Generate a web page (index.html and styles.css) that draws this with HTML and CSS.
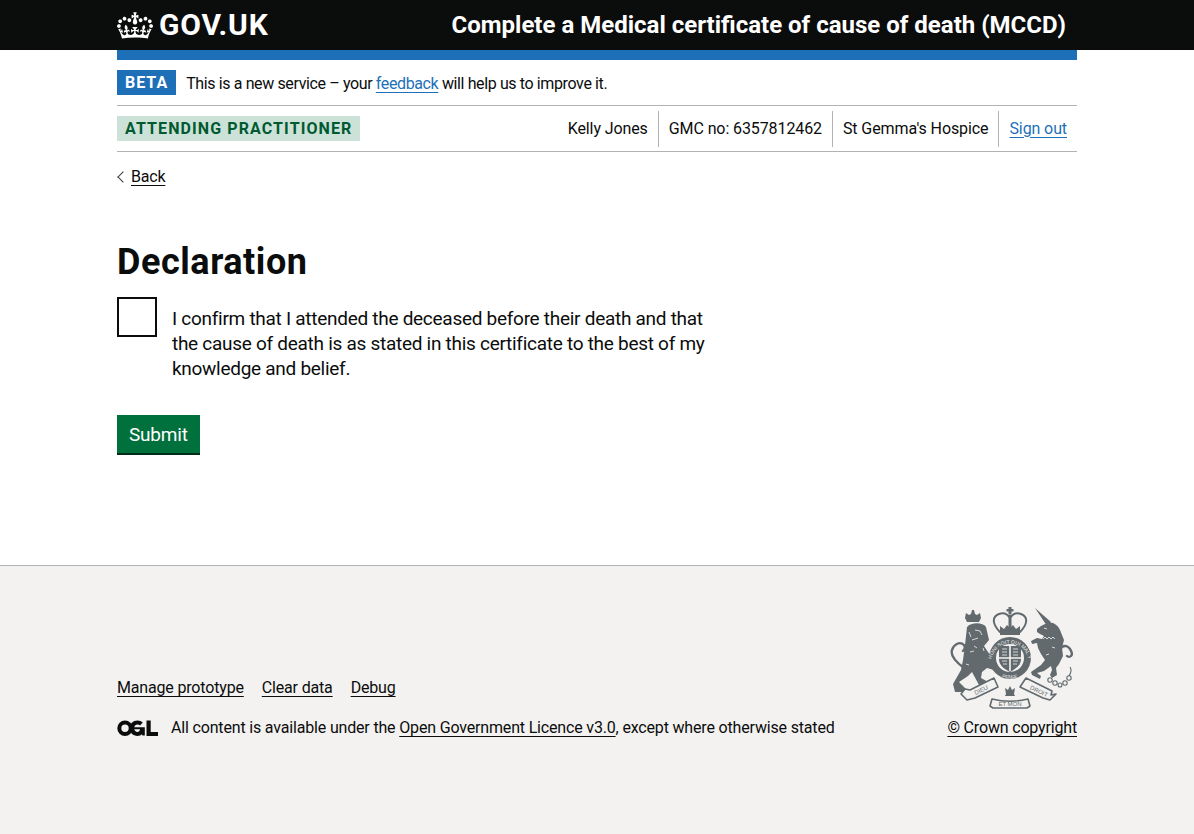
FILE: index.html
```html
<!DOCTYPE html>
<html lang="en">
<head>
<meta charset="utf-8">
<title>Declaration - Complete a Medical certificate of cause of death (MCCD)</title>
<link rel="stylesheet" href="styles.css">
</head>
<body>
<header class="header">
  <div class="container header-row">
    <a class="logo" href="#">
      <svg class="crown" viewBox="0 0 132 97" aria-hidden="true"><path fill="currentColor" fill-rule="evenodd" d="M25 30.2c3.5 1.5 7.7-.2 9.1-3.7 1.5-3.6-.2-7.8-3.9-9.2-3.6-1.4-7.6.3-9.1 3.9-1.4 3.5.3 7.5 3.9 9zM9 39.5c3.6 1.5 7.8-.2 9.2-3.7 1.5-3.6-.2-7.8-3.9-9.1-3.6-1.5-7.6.2-9.1 3.8-1.4 3.5.3 7.5 3.8 9zM4.4 57.2c3.5 1.5 7.7-.2 9.1-3.8 1.5-3.6-.2-7.7-3.9-9.1-3.5-1.5-7.6.3-9.1 3.8-1.4 3.5.3 7.6 3.9 9.1zm38.3-21.4c3.5 1.5 7.7-.2 9.1-3.8 1.5-3.6-.2-7.7-3.9-9.1-3.6-1.5-7.6.3-9.1 3.8-1.3 3.6.4 7.7 3.9 9.1zm64.4-5.6c-3.6 1.5-7.8-.2-9.1-3.7-1.5-3.6.2-7.8 3.8-9.2 3.6-1.4 7.7.3 9.2 3.9 1.3 3.5-.4 7.5-3.9 9zm15.9 9.3c-3.6 1.5-7.7-.2-9.1-3.7-1.5-3.6.2-7.8 3.7-9.1 3.6-1.5 7.7.2 9.2 3.8 1.5 3.5-.3 7.5-3.8 9zm4.7 17.7c-3.6 1.5-7.8-.2-9.2-3.8-1.5-3.6.2-7.7 3.9-9.1 3.6-1.5 7.7.3 9.2 3.8 1.3 3.5-.4 7.6-3.9 9.1zM89.3 35.8c-3.6 1.5-7.8-.2-9.2-3.8-1.4-3.6.2-7.7 3.9-9.1 3.6-1.5 7.7.3 9.2 3.8 1.4 3.6-.3 7.7-3.9 9.1zM69.7 17.7l8.9 4.7V9.3l-8.9 2.8c-.2-.3-.5-.6-.9-.9L72.4 0H59.6l3.6 11.2c-.3.3-.6.5-.9.9l-8.8-2.8v13.1l8.8-4.7c.3.3.6.7.9.9l-5 15.4v.1c-.2.8-.4 1.6-.4 2.4 0 4.1 3.1 7.5 7 8.1h.2c.3 0 .7.1 1 .1.4 0 .7 0 1-.1h.2c4-.6 7.1-4.1 7.1-8.1 0-.8-.1-1.7-.4-2.4V34l-5.1-15.4c.4-.2.7-.6 1-.9zM66 92.8c16.9 0 32.8 1.1 47.1 3.2 4-16.9 8.9-26.7 14-33.5l-9.6-3.4c1 4.9 1.1 7.2 0 10.2-1.5-1.4-3-4.3-4.2-8.7L108.6 76c2.8-2 5-3.2 7.5-3.3-4.4 9.4-10 11.9-13.6 11.2-4.3-.8-6.3-4.6-5.6-7.9 1-4.7 5.7-5.9 8-.5 4.3-8.7-3-11.4-7.6-8.8 7.1-7.2 7.9-13.5 2.1-21.1-8 6.1-8.1 12.3-4.5 20.8-4.7-5.4-12.1-2.5-9.5 6.2 3.4-5.2 7.9-2 7.2 3.1-.6 4.3-6.4 7.8-13.5 7.2-10.3-.9-10.9-8-11.2-13.8 2.5-.5 7.1 1.8 11 7.3L80.2 60c-4.1 4.4-8 5.3-12.3 5.4 1.4-4.4 8-11.6 8-11.6H55.5s6.4 7.2 7.9 11.6c-4.2-.1-8-1-12.3-5.4l1.4 16.4c3.9-5.5 8.5-7.7 10.9-7.3-.3 5.8-.9 12.8-11.1 13.8-7.2.6-12.9-2.9-13.5-7.2-.7-5 3.8-8.3 7.1-3.1 2.7-8.7-4.6-11.6-9.4-6.2 3.7-8.5 3.6-14.7-4.6-20.8-5.8 7.6-5 13.9 2.2 21.1-4.7-2.6-11.9.1-7.7 8.8 2.3-5.5 7.1-4.2 8.1.5.7 3.3-1.3 7.1-5.7 7.9-3.5.7-9-1.8-13.5-11.2 2.5.1 4.7 1.3 7.5 3.3l-4.7-15.4c-1.2 4.4-2.7 7.2-4.3 8.7-1.1-3-.9-5.3 0-10.2l-9.5 3.4c5 6.9 9.9 16.7 14 33.5 14.8-2.1 30.8-3.2 47.7-3.2z"/></svg>
      <span class="wordmark">GOV.UK</span>
    </a>
    <a class="service-name" href="#">Complete a Medical certificate of cause of death (MCCD)</a>
  </div>
</header>

<div class="container">
  <div class="blue-bar"></div>
  <div class="phase">
    <strong class="tag">BETA</strong>
    <span class="phase-text">This is a new service – your <a class="link" href="#">feedback</a> will help us to improve it.</span>
  </div>
  <div class="user-bar">
    <strong class="role">ATTENDING PRACTITIONER</strong>
    <ul class="user-list">
      <li>Kelly Jones</li>
      <li>GMC no: 6357812462</li>
      <li>St Gemma's Hospice</li>
      <li><a class="link" href="#">Sign out</a></li>
    </ul>
  </div>
  <a class="back" href="#"><span class="back-chevron"></span>Back</a>
  <main class="main">
    <h1 class="title">Declaration</h1>
    <label class="check">
      <input class="check-input" type="checkbox">
      <span class="check-box"></span>
      <span class="check-label">I confirm that I attended the deceased before their death and that the cause of death is as stated in this certificate to the best of my knowledge and belief.</span>
    </label>
    <button class="submit" type="button">Submit</button>
  </main>
</div>

<footer class="footer">
  <div class="container footer-row">
    <div class="footer-meta">
      <ul class="footer-links">
        <li><a href="#">Manage prototype</a></li>
        <li><a href="#">Clear data</a></li>
        <li><a href="#">Debug</a></li>
      </ul>
      <div class="licence">
        <svg class="ogl" viewBox="0 0 41 17" aria-hidden="true">
          <path fill="currentColor" fill-rule="evenodd" d="M8 .5a7.7 7.7 0 1 0 0 15.4A7.700 7.700 0 0 0 8 .5zm0 4a3.700 3.700 0 1 1 0 7.400 3.700 3.700 0 0 1 0-7.400z"/>
          <path fill="currentColor" d="M23.600 7.300h-6.300c.3-1.700 1.300-2.900 3.200-2.900 1 0 1.900.4 2.500 1l2.800-2.800C24.400 1.200 22.600.5 20.500.5c-4.500 0-7.800 3.300-7.800 7.700s3.300 7.700 7.800 7.700c1.800 0 3.400-.6 4.500-1.700l.4 1.400h2.400V7.300h-4.200zm-3.100 4.600c-1.800 0-2.900-1.200-3.200-2.600h3.400v-.1h2.400c-.3 1.600-1.300 2.700-2.600 2.700z"/>
          <path fill="currentColor" d="M29.500.5h4.200v11.400H41v4H29.500z"/>
        </svg>
        <span>All content is available under the <a href="#">Open Government Licence v3.0</a>, except where otherwise stated</span>
      </div>
    </div>
    <div class="copyright">
      <svg class="crest" viewBox="949 606 125 103" role="img" aria-label="Royal coat of arms">
        <defs>
          <path id="garter-arc" d="M991.500 662a18.500 18.500 0 1 1 37 0"/>
          <path id="garter-low" d="M993 668a18.500 18.500 0 0 0 34 0"/>
        </defs>
        <!-- lion -->
        <g class="crest-fill">
          <path d="M966 613l3 2 2-1 1-4 2 0 1 4 2 1 3-2 1 5-2 4h-12l-2-4z"/>
          <path d="M967 627c4-5 16-5 19 0l3 13-5 6 6 9 6 9-2 6-7-2-5 4-1 6 9 5 1 3-12-1-7-13-4 4-9 6 7 7 2 3h-13l-2-8 8-14 2-10 2-15z"/>
        </g>
        <path class="crest-line" d="M964 668c-8-6-14-12-12-18 2-6 8-9 12-5 2 3 0 5-1 6"/>
        <path class="crest-mark" d="M975 630l5 1 2 4M972 640l6-2M969 632l2 5M974 646l3 2M970 652l4-1M983 648l1 3M966 664l3 1"/>
        <!-- crown -->
        <path class="crest-line crest-thin" d="M1000 632c-7-7-9-15-1-18 5-2 9 1 11 4 2-3 6-6 11-4 8 3 6 11-1 18"/>
        <g class="crest-fill">
          <path d="M1008.500 607h3v2h2v2.500h-2v3h-3v-3h-2V609h2z"/>
          <path d="M1008.500 615h3v14h-3z"/>
          <path d="M1000 626l4 3 3-4 3 3 3-3 3 4 4-3v9h-20z"/>
        </g>
        <!-- garter and shield -->
        <path class="crest-fill" fill-rule="evenodd" d="M1010 637a21 21 0 1 0 0 42 21 21 0 0 0 0-42zm0 7a14 14 0 1 1 0 28 14 14 0 0 1 0-28z"/>
        <text class="garter-text"><textPath href="#garter-arc" startOffset="50%" text-anchor="middle">HONI SOIT QUI MAL Y</textPath></text>
        <text class="garter-text"><textPath href="#garter-low" startOffset="50%" text-anchor="middle">PENSE</textPath></text>
        <path class="crest-fill" d="M999 646h22v13c0 6-5 10-11 13-6-3-11-7-11-13z"/>
        <path class="crest-mark crest-bold" d="M1010 646v25M999 658h22"/>
        <path class="crest-mark" d="M1002 649h5M1002 652h5M1002 655h5M1013 649h5M1013 652h5M1013 655h5M1002 661h5M1003 664h4M1013 661h5M1013 664h4"/>
        <!-- unicorn -->
        <path class="crest-fill" d="M1035 608L1051 622 1047 626zM1047 623c5-2 11 2 13 7l4 10-2 8 1 8-4 8-3 4 1 7-5 3-2-3 2-5-1-4-7 5-7 2 4 3-1 3-8-4-1-3 10-7 4-5-4-6-3-6-1-5-5 1-1-3 6-3 5 1 2-3-4-2-3-2v-3l4-3z"/>
        <path class="crest-mark" d="M1043 639l2-2 2 2 2-2 2 2 2-2 2 2M1044 628l3 1M1052 647l3 1M1046 655l3-1"/>
        <path class="crest-line" d="M1058 657c2-4 2-8 4-10 3-2 6-1 8 2 2 3 3 5 1 7-1 1-3 1-4 0"/>
        <g class="crest-ring">
          <circle cx="1050" cy="680" r="2.200"/>
          <circle cx="1055" cy="683" r="2.200"/>
          <circle cx="1060" cy="685" r="2"/>
          <circle cx="1065" cy="683" r="2.200"/>
          <circle cx="1069" cy="678" r="2.200"/>
          <path d="M1069 676c2-3 3-6 1-9"/>
        </g>
        <!-- badge -->
        <path class="crest-fill" d="M1010 686l2 4 3-2-1 6 1 2h-10l1-2-1-6 3 2z"/>
        <!-- motto scroll -->
        <path class="crest-band" d="M961 694l6 6 8-2 23-11-4-9-24 12-5-1zM992 699c12 3 24 3 36 0l2 7-3 2h-34l-3-2zM1026 678l26 13-1 4 5-1-6 6-7-2-23-11z"/>
        <text class="crest-text" x="982" y="692" transform="rotate(-25 982 692)" text-anchor="middle">DIEU</text>
        <text class="crest-text" x="1010" y="706" text-anchor="middle">ET MON</text>
        <text class="crest-text" x="1038" y="693" transform="rotate(25 1038 693)" text-anchor="middle">DROIT</text>
      </svg>
      <a href="#">© Crown copyright</a>
    </div>
  </div>
</footer>
</body>
</html>
```

FILE: styles.css
```css
* { box-sizing: border-box; }
html, body { margin: 0; padding: 0; }
body {
  min-height: 100vh;
  display: flex;
  flex-direction: column;
  font-family: Roboto, "Liberation Sans", sans-serif;
  font-size: 16px;
  letter-spacing: -.2px;
  color: #0b0c0c;
  background: #fff;
}
.container { width: 960px; margin: 0 auto; }

.header { background: #0b0c0c; height: 50px; color: #fff; }
.header-row { display: flex; justify-content: space-between; align-items: center; height: 50px; padding-right: 11px; }
.logo { display: flex; align-items: center; color: #fff; text-decoration: none; }
.crown { width: 36px; height: 27px; margin-right: 6px; }
.wordmark { font-size: 30px; font-weight: 700; line-height: 50px; letter-spacing: .8px; }
.service-name { color: #fff; text-decoration: none; font-size: 24px; font-weight: 700; letter-spacing: 0; }

.blue-bar { height: 10px; background: #1d70b8; }
.phase { display: flex; align-items: center; gap: 10px; height: 46px; border-bottom: 1px solid #b1b4b6; }
.phase-text { padding-top: 2px; letter-spacing: -.38px; }
.tag { background: #1d70b8; color: #fff; font-size: 16px; letter-spacing: 1px; line-height: 25px; padding: 0 8px; font-weight: 700; }
.link { color: #1d70b8; text-underline-offset: 3px; }

.user-bar { display: flex; justify-content: space-between; align-items: center; height: 46px; border-bottom: 1px solid #b1b4b6; }
.role { background: #cce2d8; color: #005a30; font-size: 16px; letter-spacing: 1.1px; line-height: 25px; padding: 0 8px; font-weight: 700; }
.user-list { display: flex; list-style: none; margin: 0; padding: 0; letter-spacing: -.1px; }
.user-list li { padding: 0 10px; line-height: 36px; border-left: 1px solid #b1b4b6; }
.user-list li:first-child { border-left: 0; }

.back { display: inline-flex; align-items: center; margin-top: 15px; margin-bottom: 1px; color: #0b0c0c; line-height: 20px; text-decoration: underline; text-underline-offset: 3px; }
.back-chevron { width: 8px; height: 8px; border-left: 1px solid #383f43; border-bottom: 1px solid #383f43; transform: rotate(45deg); margin: 0 4px 0 2px; }

.title { margin: 54px 0 15px; font-size: 36px; line-height: 40px; font-weight: 700; letter-spacing: .55px; }
.check { display: flex; position: relative; max-width: 640px; margin-bottom: 34px; }
.check-input { position: absolute; opacity: 0; width: 40px; height: 40px; margin: 0; }
.check-box { flex: none; width: 40px; height: 40px; border: 2px solid #0b0c0c; background: #fff; margin-right: 15px; }
.check-label { font-size: 19px; letter-spacing: -.28px; line-height: 25px; width: 540px; padding-top: 9px; }
.submit { display: block; background: #00703c; color: #fff; border: 0; box-shadow: 0 2px 0 #002d18; font: inherit; font-size: 19px; letter-spacing: -.2px; line-height: 25px; height: 38px; padding: 0 12px; margin-bottom: 112px; }

.footer { flex: 1; background: #f3f2f1; border-top: 1px solid #b1b4b6; padding-top: 40px; letter-spacing: -.17px; }
.footer-row { display: flex; justify-content: space-between; align-items: flex-end; }
.footer a { color: #0b0c0c; text-underline-offset: 3px; }
.footer-links { display: flex; gap: 18px; list-style: none; margin: 0 0 16px; padding: 0; line-height: 24px; }
.licence { display: flex; align-items: center; gap: 13px; line-height: 24px; }
.ogl { width: 41px; height: 17px; color: #0b0c0c; }
.copyright { display: flex; flex-direction: column; align-items: flex-end; line-height: 24px; }
.crest { width: 125px; height: 103px; margin: 0 3px 7px 0; }
.crest-fill { fill: #626a6e; }
.crest-line { fill: none; stroke: #626a6e; stroke-width: 2.4; stroke-linecap: round; }
.crest-thin { stroke-width: 2; }
.crest-mark { fill: none; stroke: #f3f2f1; stroke-width: .8; }
.crest-bold { stroke-width: 1.6; }
.crest-ring { fill: none; stroke: #626a6e; stroke-width: 1.1; }
.crest-band { fill: #f3f2f1; stroke: #626a6e; stroke-width: 1.6; stroke-linejoin: round; }
.crest-text { font-family: "Liberation Sans", sans-serif; font-size: 6px; letter-spacing: 0; fill: #626a6e; }
.garter-text { font-family: "Liberation Sans", sans-serif; font-size: 5px; letter-spacing: 0; fill: #f3f2f1; }
```
